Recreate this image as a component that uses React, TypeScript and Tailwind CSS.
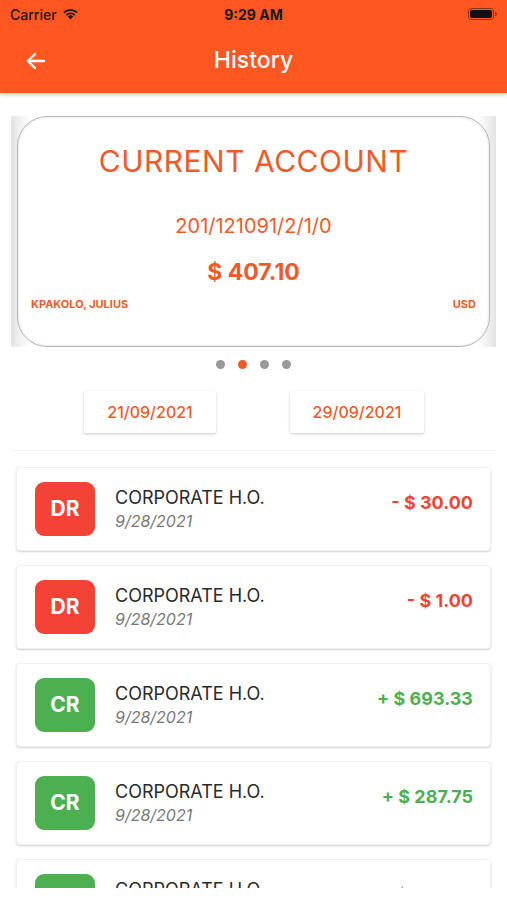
import React from "react";

const txs = [
  { type: "DR", amt: "- $ 30.00" },
  { type: "DR", amt: "- $ 1.00" },
  { type: "CR", amt: "+ $ 693.33" },
  { type: "CR", amt: "+ $ 287.75" },
  { type: "CR", amt: "+ $ 150.00" },
];

export default function App() {
  return (
    <div
      className="w-[507px] h-[900px] bg-white flex flex-col overflow-hidden"
      style={{ fontFamily: "Inter, 'Noto Sans', sans-serif" }}
    >
      {/* Header */}
      <div className="bg-[#FF5722] h-[93px] flex flex-col shadow-[0_2px_4px_rgba(0,0,0,0.2)] relative z-10 shrink-0">
        <div className="h-[28px] flex items-center justify-between px-[10px] text-[#1a1a1a]">
          <div className="flex items-center gap-[5px] w-[120px]">
            <span className="text-[14px] font-medium">Carrier</span>
            <svg width="17" height="12" viewBox="0 0 17 12">
              <path d="M8.5 11.5 L5.8 8.6 A4 4 0 0 1 11.2 8.6 Z" fill="#1a1a1a" />
              <path d="M3.6 6.4 A7 7 0 0 1 13.4 6.4 L12.1 7.7 A5.2 5.2 0 0 0 4.9 7.7 Z" fill="#1a1a1a" />
              <path d="M1.2 4 A10.5 10.5 0 0 1 15.8 4 L14.5 5.3 A8.7 8.7 0 0 0 2.5 5.3 Z" fill="#1a1a1a" />
            </svg>
          </div>
          <span className="text-[14px] font-bold">9:29 AM</span>
          <div className="w-[120px] flex justify-end items-center">
            <div className="w-[26px] h-[12px] rounded-[3px] border border-[#8a3a1a] p-[1px] flex">
              <div className="flex-1 bg-[#111] rounded-[2px]" />
            </div>
            <div className="w-[2px] h-[4px] bg-[#8a3a1a] rounded-r-sm ml-[1px]" />
          </div>
        </div>
        <div className="flex-1 flex items-center relative">
          <div className="pl-[24px] w-[80px] flex items-center">
            <svg width="24" height="24" viewBox="0 0 24 24" fill="none" stroke="white" strokeWidth="2.4" strokeLinecap="round" strokeLinejoin="round">
              <path d="M20 12H4" />
              <path d="M11 5l-7 7 7 7" />
            </svg>
          </div>
          <div className="flex-1 text-center text-white text-[23px] font-medium -ml-[80px]">History</div>
        </div>
      </div>

      {/* Account card */}
      <div className="mt-[23px] mx-[11px] bg-[linear-gradient(to_right,#e4e4e4,#ffffff_4%,#ffffff_96%,#e4e4e4)] flex">
        <div className="mx-[6px] flex-1 h-[231px] bg-white rounded-[30px] border border-[#b5b5b5] shadow-[inset_0_0_3px_rgba(0,0,0,0.15)] flex flex-col items-center text-[#F05A28]">
          <div className="mt-[26px] text-[30px] leading-[36px] tracking-[0.5px]">CURRENT ACCOUNT</div>
          <div className="mt-[35px] text-[20px] leading-[24px]">201/121091/2/1/0</div>
          <div className="mt-[20px] text-[23px] leading-[28px] font-bold">$ 407.10</div>
          <div className="mt-[11px] w-full flex justify-between px-[13px] text-[11px] font-bold leading-[14px]">
            <span>KPAKOLO, JULIUS</span>
            <span>USD</span>
          </div>
        </div>
      </div>

      {/* Dots */}
      <div className="mt-[13px] flex justify-center gap-[13px]">
        <div className="w-[9px] h-[9px] rounded-full bg-[#9a9a9a]" />
        <div className="w-[9px] h-[9px] rounded-full bg-[#F05A28]" />
        <div className="w-[9px] h-[9px] rounded-full bg-[#9a9a9a]" />
        <div className="w-[9px] h-[9px] rounded-full bg-[#9a9a9a]" />
      </div>

      {/* Date buttons */}
      <div className="mt-[22px] flex pl-[84px] gap-[74px]">
        <div className="w-[132px] h-[42px] bg-white shadow-[0_1px_3px_rgba(0,0,0,0.22)] rounded-[2px] flex items-center justify-center text-[16px] font-medium text-[#F05A28]">
          21/09/2021
        </div>
        <div className="w-[134px] h-[42px] bg-white shadow-[0_1px_3px_rgba(0,0,0,0.22)] rounded-[2px] flex items-center justify-center text-[16px] font-medium text-[#F05A28]">
          29/09/2021
        </div>
      </div>

      {/* List */}
      <div className="mt-[17px] mx-[10px] h-[438px] overflow-hidden border-t border-[#f3f3f3] flex flex-col gap-[14px] pt-[16px]">
        {txs.map((t, i) => {
          const dr = t.type === "DR";
          return (
            <div
              key={i}
              className="mx-[6px] shrink-0 h-[84px] bg-white rounded-[4px] border border-[#f0f0f0] shadow-[0_1px_2px_rgba(0,0,0,0.18)] flex items-center pl-[18px] pr-[17px]"
            >
              <div
                className={`w-[60px] h-[54px] rounded-[9px] flex items-center justify-center text-white text-[21px] font-bold ${
                  dr ? "bg-[#F44336]" : "bg-[#4CAF50]"
                }`}
              >
                {t.type}
              </div>
              <div className="ml-[20px] flex flex-col">
                <span className="text-[18px] leading-[24px] text-[#2a2a2a]">CORPORATE H.O.</span>
                <span className="text-[16px] leading-[22px] italic text-[#777]">9/28/2021</span>
              </div>
              <div
                className={`ml-auto -mt-[14px] text-[18px] font-bold ${dr ? "text-[#F44336]" : "text-[#4CAF50]"}`}
              >
                {t.amt}
              </div>
            </div>
          );
        })}
      </div>
    </div>
  );
}
